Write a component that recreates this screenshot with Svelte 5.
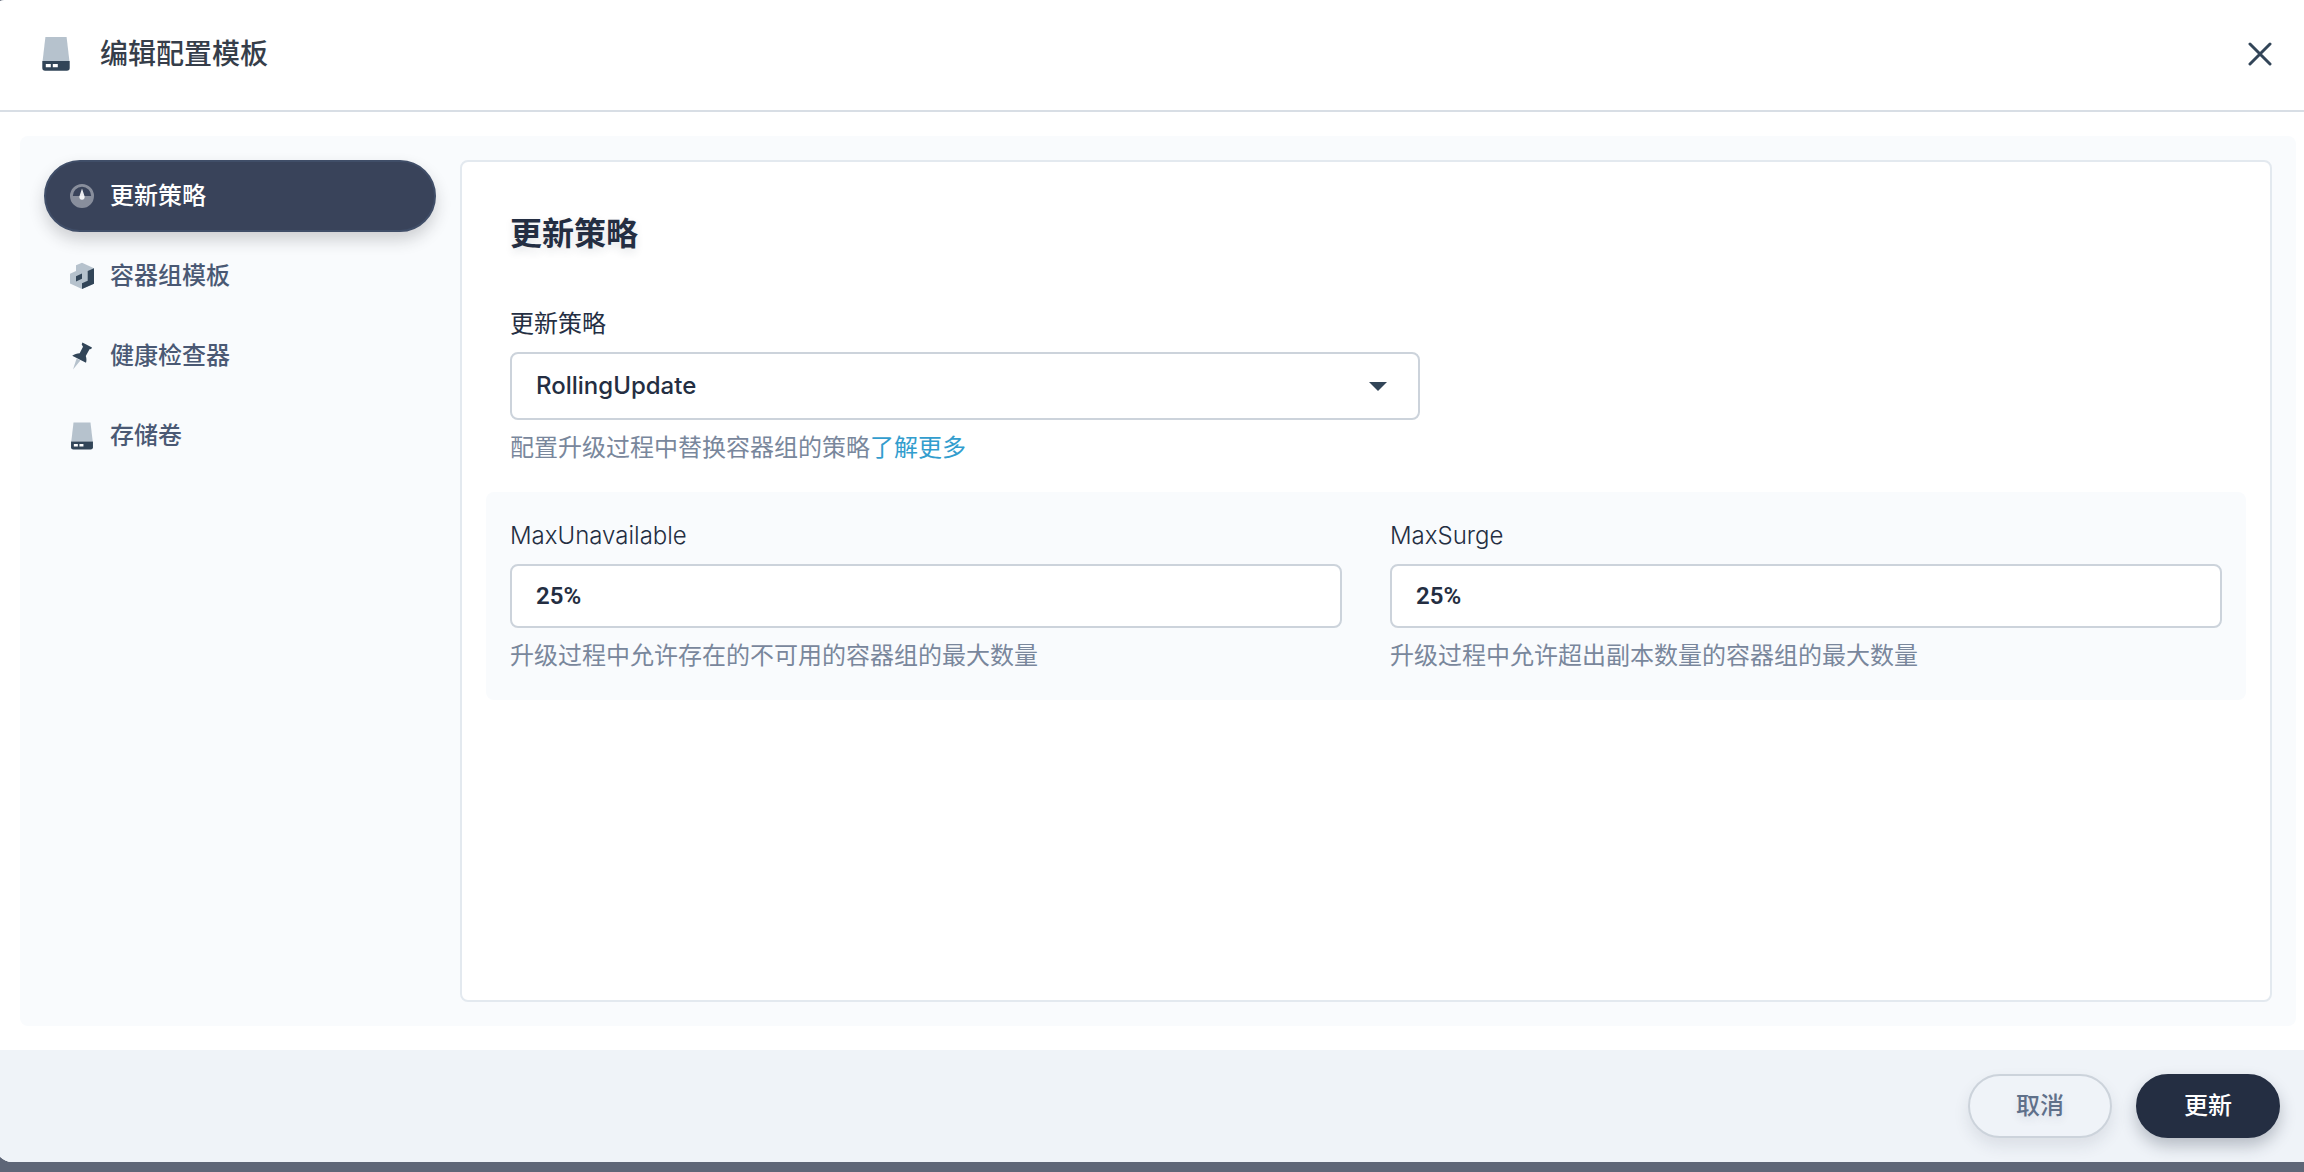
<script lang="ts">
	type Icon = 'strategy' | 'pod' | 'pin' | 'storage';

	const tabs: { id: string; label: string; icon: Icon }[] = [
		{ id: 'strategy', label: '更新策略', icon: 'strategy' },
		{ id: 'template', label: '容器组模板', icon: 'pod' },
		{ id: 'probe', label: '健康检查器', icon: 'pin' },
		{ id: 'volume', label: '存储卷', icon: 'storage' }
	];

	let active = $state('strategy');
	let strategy = $state('RollingUpdate');
	let maxUnavailable = $state('25%');
	let maxSurge = $state('25%');
</script>

{#snippet icon(name: Icon)}
	{#if name === 'strategy'}
		<svg class="icon" viewBox="0 0 32 32" aria-hidden="true">
			<path
				class="gauge"
				fill-rule="evenodd"
				d="M16 4a12 12 0 1 0 0 24a12 12 0 1 0 0-24zM6.8 16a9.2 9.2 0 0 1 18.4 0z"
			/>
			<path class="needle" d="M16 8.6l2.4 7.2a2.7 2.7 0 1 1-4.8 0z" />
		</svg>
	{:else if name === 'pod'}
		<svg class="icon" viewBox="0 0 32 32" aria-hidden="true">
			<path class="light" d="M16 2.7l12 5.6v15.4L16 29 4 23.4v-9.7L10 11V5.2z" />
			<path class="dark" d="M28 8.3v15.5L16 29v-5.7l5.7-2.6V11zM10 16.2l6-2.6v5.2l-6 2.6z" />
		</svg>
	{:else if name === 'pin'}
		<svg class="icon" viewBox="0 0 32 32" aria-hidden="true">
			<path class="light" d="M10.6 18.4l3.8 2L7 29.4z" />
			<path
				class="dark"
				d="M16.4 2.6L26 7.4l-.8 1.6-1.7.3-3.7 6.7c.8 2.3.9 4.7.2 6.8L6.2 15.7c2.2-1.5 4.8-2.2 7.5-2.4l3.3-6.6-1.3-2.2z"
			/>
		</svg>
	{:else}
		<svg class="icon" viewBox="0 0 40 40" aria-hidden="true">
			<path class="light" d="M9.4 3h21.2l2.8 24H6.6z" />
			<path class="dark" d="M6.3 27h27.4v7a2.8 2.8 0 0 1-2.8 2.8H9.1a2.8 2.8 0 0 1-2.8-2.8z" />
			<path class="slot" d="M9.8 30h5v3.2h-5zM16.8 30h5v3.2h-5z" />
		</svg>
	{/if}
{/snippet}

<div class="backdrop">
	<div class="modal" role="dialog" aria-labelledby="modal-title">
		<header>
			{@render icon('storage')}
			<h1 id="modal-title">编辑配置模板</h1>
			<button class="close" type="button" aria-label="关闭">
				<svg viewBox="0 0 24 24" aria-hidden="true">
					<path d="M2 2l20 20M22 2L2 22" />
				</svg>
			</button>
		</header>

		<div class="body">
			<div class="panel">
				<nav>
					{#each tabs as tab (tab.id)}
						<button
							class="tab"
							class:active={active === tab.id}
							type="button"
							onclick={() => (active = tab.id)}
						>
							{@render icon(tab.icon)}
							{tab.label}
						</button>
					{/each}
				</nav>

				<section class="content">
					<h2>更新策略</h2>

					<div class="field main">
						<label for="strategy">更新策略</label>
						<div class="select">
							<select id="strategy" bind:value={strategy}>
								<option>RollingUpdate</option>
								<option>Recreate</option>
							</select>
							<svg class="caret" viewBox="0 0 18 9" aria-hidden="true">
								<path d="M0 0h18L9 9z" />
							</svg>
						</div>
						<p class="hint">配置升级过程中替换容器组的策略<a href="#more">了解更多</a></p>
					</div>

					<div class="group">
						<div class="field">
							<label for="max-unavailable">MaxUnavailable</label>
							<input id="max-unavailable" type="text" bind:value={maxUnavailable} />
							<p class="hint">升级过程中允许存在的不可用的容器组的最大数量</p>
						</div>
						<div class="field">
							<label for="max-surge">MaxSurge</label>
							<input id="max-surge" type="text" bind:value={maxSurge} />
							<p class="hint">升级过程中允许超出副本数量的容器组的最大数量</p>
						</div>
					</div>
				</section>
			</div>
		</div>

		<footer>
			<button class="btn cancel" type="button">取消</button>
			<button class="btn primary" type="button">更新</button>
		</footer>
	</div>
</div>

<style>
	:global(body) {
		background: #5e6677;
	}

	.backdrop {
		box-sizing: border-box;
		min-height: 100vh;
		padding-bottom: 10px;
		overflow: hidden;
		display: flex;
		flex-direction: column;
		background: #5e6677;
		color: #242e42;
		font-family: Inter, 'Noto Sans CJK SC', sans-serif;
		font-size: 24px;
		line-height: 32px;
	}

	/* the dialog runs slightly past both sides of the window */
	.modal {
		flex: 1;
		display: flex;
		flex-direction: column;
		margin: 0 -16px 0 -4px;
		overflow: hidden;
		border-radius: 8px 8px 16px 16px;
		background: #fff;
	}

	h1,
	h2,
	p {
		margin: 0;
	}

	button,
	input,
	select {
		box-sizing: border-box;
		margin: 0;
		font: inherit;
	}

	button {
		cursor: pointer;
	}

	header {
		display: flex;
		align-items: center;
		gap: 24px;
		padding: 34px 48px 36px 40px;
		border-bottom: 2px solid #d8dee5;
	}

	header .icon {
		width: 40px;
		height: 40px;
	}

	h1 {
		flex: 1;
		font-size: 28px;
		font-weight: 500;
		line-height: 40px;
		color: #363e4a;
	}

	.icon {
		flex: none;
		width: 32px;
		height: 32px;
	}

	.light {
		fill: #b6c2cd;
	}

	.dark {
		fill: #324558;
	}

	.slot {
		fill: #fff;
	}

	.gauge {
		fill: #fff;
		fill-opacity: 0.4;
	}

	.needle {
		fill: #fff;
		fill-opacity: 0.9;
	}

	.close {
		padding: 0;
		border: 0;
		background: none;
	}

	.close svg {
		display: block;
		width: 24px;
		height: 24px;
	}

	.close path {
		fill: none;
		stroke: #324558;
		stroke-width: 3;
		stroke-linecap: round;
	}

	.body {
		flex: 1;
		display: flex;
		padding: 24px;
	}

	.panel {
		flex: 1;
		display: flex;
		gap: 24px;
		padding: 24px;
		border-radius: 8px;
		background: #f9fbfd;
	}

	nav {
		flex: none;
		width: 392px;
		display: flex;
		flex-direction: column;
		gap: 8px;
	}

	.tab {
		display: flex;
		align-items: center;
		gap: 12px;
		height: 72px;
		padding: 0 20px;
		border: 2px solid transparent;
		border-radius: 36px;
		background: none;
		color: #4a5974;
		font-weight: 500;
		text-align: left;
	}

	.tab.active {
		border-color: #404e68;
		background: #39435a;
		box-shadow: 0 8px 16px rgba(35, 35, 40, 0.2);
		color: #fff;
	}

	.content {
		flex: 1;
		min-width: 0;
		padding: 52px 24px 24px;
		border: 2px solid #e3e9ef;
		border-radius: 8px;
		background: #fff;
	}

	h2 {
		margin: 0 24px 54px;
		font-size: 32px;
		font-weight: 600;
		line-height: 40px;
		text-shadow: 0 4px 8px rgba(36, 46, 66, 0.12);
	}

	.field {
		display: flex;
		flex-direction: column;
		gap: 12px;
	}

	.main {
		max-width: 910px;
		margin: 0 24px 28px;
	}

	.group label {
		font-weight: 300;
	}

	.select {
		position: relative;
	}

	select,
	input {
		display: block;
		width: 100%;
		height: 64px;
		padding: 0 24px;
		border: 2px solid #ccd3db;
		border-radius: 8px;
		background: #fff;
		color: #242e42;
		font-weight: 500;
	}

	select {
		height: 68px;
		appearance: none;
	}

	input {
		font-family: Roboto, 'Noto Sans CJK SC', sans-serif;
		font-weight: 600;
	}

	.caret {
		position: absolute;
		top: 30px;
		right: 33px;
		width: 18px;
		height: 9px;
		fill: #324558;
		pointer-events: none;
	}

	.hint {
		color: #79879c;
	}

	.hint a {
		color: #329dce;
		text-decoration: none;
	}

	.group {
		display: grid;
		grid-template-columns: 1fr 1fr;
		gap: 48px;
		padding: 28px 24px;
		border-radius: 8px;
		background: #f9fbfd;
	}

	footer {
		display: flex;
		justify-content: flex-end;
		gap: 24px;
		padding: 24px 40px;
		background: #eff3f8;
	}

	.btn {
		width: 144px;
		height: 64px;
		border: 2px solid #242e42;
		border-radius: 32px;
		background: #242e42;
		box-shadow: 0 8px 16px rgba(36, 46, 66, 0.28);
		color: #fff;
		font-weight: 500;
	}

	.cancel {
		border-color: #ccd3db;
		background: #eff3f8;
		box-shadow: 0 8px 16px rgba(36, 46, 66, 0.1);
		color: #5f708a;
		text-shadow: 0 4px 8px rgba(36, 46, 66, 0.1);
	}
</style>
